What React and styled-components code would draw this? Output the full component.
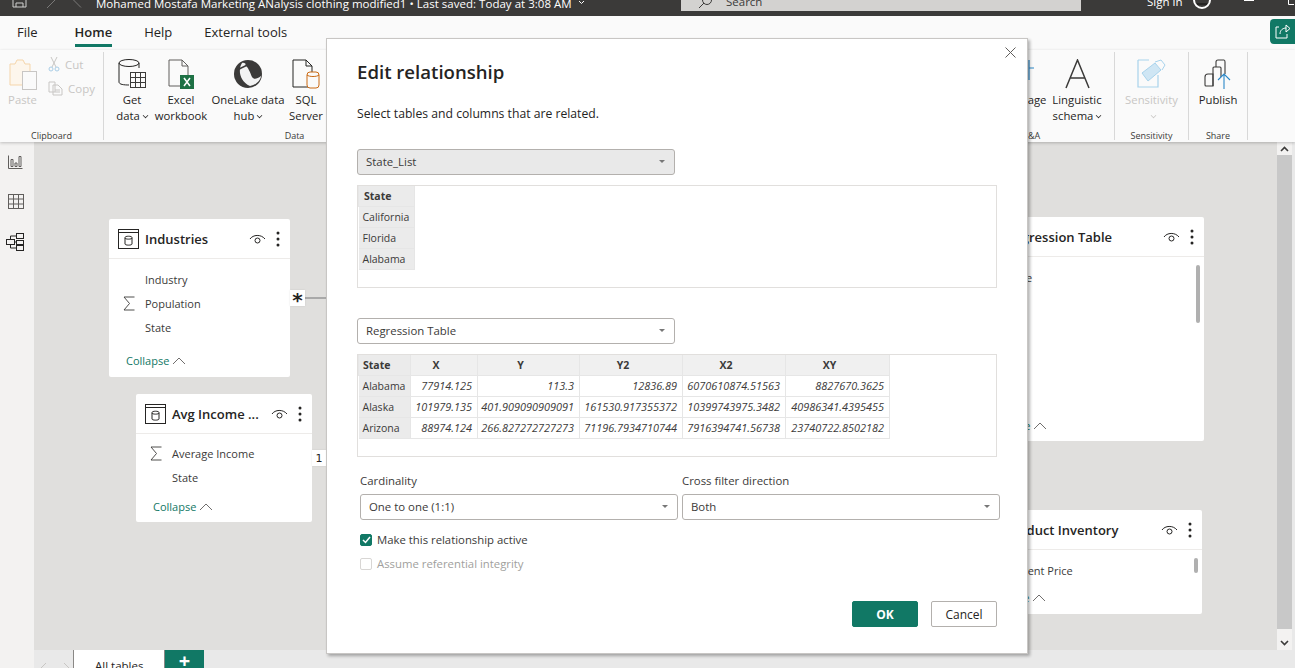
import React from 'react'
import styled, { createGlobalStyle } from 'styled-components'

const FONT = '"Open Sans", "Noto Sans", sans-serif'

const GlobalStyle = createGlobalStyle`
    html, body {
        margin: 0;
        padding: 0;
        height: 100%;
        overflow: hidden;
        background: #f3f2f1;
    }
    * { box-sizing: border-box; }
`

const Page = styled.div`
    position: relative;
    width: 1295px;
    height: 668px;
    overflow: hidden;
    display: flex;
    flex-direction: column;
    font-family: ${FONT};
    color: #252423;
`

const TitleBar = styled.div`
    height: 16px;
    flex: none;
    background: #3b3a39;
    display: flex;
    align-items: flex-start;
    color: #fff;
    font-size: 11.5px;
    overflow: hidden;
`

const TitleIcons = styled.div`
    width: 96px;
    flex: none;
    height: 16px;
    padding-left: 12px;
    display: flex;
    align-items: flex-start;
    gap: 17px;
`

const TitleText = styled.div`
    width: 585px;
    flex: none;
    white-space: nowrap;
    line-height: 7px;
    letter-spacing: 0.02px;
    display: flex;
    gap: 6px;
`

const SearchBox = styled.div`
    width: 400px;
    flex: none;
    height: 11px;
    background: #d3d2d0;
    color: #3b3a39;
    display: flex;
    align-items: flex-start;
    padding-left: 17px;
    gap: 14px;
    font-size: 11.5px;
    line-height: 3px;
`

const SignIn = styled.div`
    margin-left: 66px;
    line-height: 3px;
    display: flex;
    gap: 10px;
    align-items: flex-start;
`

const WindowButtons = styled.div`
    margin-left: 32px;
    width: 50px;
    flex: none;
    line-height: 0;
`

const TabRow = styled.div`
    height: 34px;
    flex: none;
    background: #fafafa;
    display: flex;
    padding-left: 17px;
    gap: 32px;
    position: relative;
`

const Tab = styled.div`
    font-size: 13px;
    height: 31px;
    line-height: 32px;
    margin-left: ${p => (p.$active ? 5 : 0)}px;
    color: #252423;
    font-weight: ${p => (p.$active ? 600 : 400)};
    border-bottom: 3px solid ${p => (p.$active ? '#117865' : 'transparent')};
`

const ShareBtn = styled.div`
    position: absolute;
    right: 0;
    top: 3px;
    width: 25px;
    height: 25px;
    background: #117865;
    border-radius: 4px 0 0 4px;
    display: flex;
    align-items: center;
    justify-content: center;
`

const Ribbon = styled.div`
    height: 92px;
    flex: none;
    background: #fafafa;
    display: flex;
    box-shadow: 0 1px 3px rgba(0, 0, 0, 0.22);
    position: relative;
    z-index: 1;
`

const Group = styled.div`
    width: ${p => p.$w}px;
    flex: none;
    height: 88px;
    margin-top: 2px;
    border-right: 1px solid #d8d8d8;
    display: flex;
    flex-direction: column;
`

const GroupItems = styled.div`
    flex: 1;
    display: flex;
    padding-left: ${p => p.$pad || 0}px;
    min-height: 0;
`

const GroupLabel = styled.div`
    height: 10px;
    text-align: center;
    font-size: 9px;
    line-height: 12px;
    color: #3b3a39;
`

const RibbonBtn = styled.div`
    width: ${p => p.$w}px;
    flex: none;
    display: flex;
    flex-direction: column;
    align-items: center;
    padding-top: 4px;
    font-size: 11.3px;
    line-height: 16px;
    text-align: center;
    white-space: nowrap;
    color: ${p => (p.$off ? '#c8c6c4' : '#252423')};
    svg { flex: none; }
`

const IconSlot = styled.div`
    height: 36px;
    display: flex;
    align-items: center;
    justify-content: center;
    flex: none;
`

const Chevron = styled.span`
    display: inline-block;
    width: 5px;
    height: 5px;
    margin-left: 3px;
    border-right: 1px solid currentColor;
    border-bottom: 1px solid currentColor;
    transform: translateY(-2px) rotate(45deg) scale(0.8);
`

const SmallCol = styled.div`
    display: flex;
    flex-direction: column;
    gap: 6px;
    padding-top: 3px;
    margin-left: 12px;
`

const SmallBtn = styled.div`
    display: flex;
    align-items: center;
    gap: 5px;
    height: 18px;
    font-size: 11.5px;
    color: #c8c6c4;
`

const Body = styled.div`
    flex: 1;
    display: flex;
    min-height: 0;
`

const Rail = styled.div`
    width: 34px;
    flex: none;
    background: #f3f2f1;
    display: flex;
    flex-direction: column;
    align-items: center;
    gap: 24px;
    padding: 13px 3px 0 0;
`

const Main = styled.div`
    flex: 1;
    display: flex;
    flex-direction: column;
    min-width: 0;
    background: #e9e9e9;
`

const CanvasRow = styled.div`
    height: 508px;
    flex: none;
    display: flex;
`

const Canvas = styled.div`
    position: relative;
    width: 1243px;
    flex: none;
    background: #e0dfdd;
    overflow: hidden;
`

const ScrollTrack = styled.div`
    width: 15px;
    flex: none;
    background: #c8c8c8;
    display: flex;
    flex-direction: column;
    justify-content: space-between;
`

const ScrollArrow = styled.div`
    height: ${p => (p.$up ? 13 : 21)}px;
    background: #f3f2f1;
    display: flex;
    justify-content: center;
    align-items: ${p => (p.$up ? 'flex-start' : 'flex-end')};
    padding: ${p => (p.$up ? '4px 0 0' : '0 0 4px')};
`

const BottomBar = styled.div`
    flex: 1;
    background: #e9e9e9;
    display: flex;
`

const SheetNav = styled.div`
    width: 39px;
    flex: none;
    display: flex;
    gap: 16px;
    padding: 13px 0 0 6px;
`

const SheetTab = styled.div`
    width: 92px;
    flex: none;
    padding: 7px 0 0 21px;
    background: #fff;
    border-left: 1px solid #8a8886;
    border-right: 1px solid #8a8886;
    font-size: 11.5px;
    line-height: 18px;
    white-space: nowrap;
`

const AddTab = styled.div`
    width: 39px;
    flex: none;
    background: #117865;
    color: #fff;
    font-size: 20px;
    font-weight: 700;
    line-height: 22px;
    text-align: center;
    overflow: hidden;
`

const Card = styled.div`
    position: absolute;
    left: ${p => p.$x}px;
    top: ${p => p.$y}px;
    width: ${p => p.$w}px;
    height: ${p => p.$h}px;
    background: #fff;
    border-radius: 2px;
`

const CardHead = styled.div`
    height: 40px;
    border-bottom: 1px solid #edebe9;
    display: flex;
    align-items: center;
    padding: 0 10px 0 9px;
    svg { flex: none; }
`

const CardTitle = styled.div`
    flex: 1;
    min-width: 0;
    margin-left: 6px;
    font-size: 13px;
    font-weight: 600;
    color: #252423;
    white-space: nowrap;
`

const Field = styled.div`
    height: 24px;
    display: flex;
    align-items: center;
    padding-left: 12px;
    font-size: 11px;
    color: #3b3a39;
`

const FieldIcon = styled.span`
    width: 24px;
    flex: none;
    display: flex;
    padding-left: 2px;
`

const Fields = styled.div`
    padding-top: ${p => p.$top}px;
`

const Collapse = styled.div`
    display: flex;
    align-items: center;
    gap: 3px;
    padding-left: 17px;
    margin-top: ${p => p.$top}px;
    font-size: 11px;
    line-height: 16px;
    color: #117865;
`

const CardScroll = styled.div`
    position: absolute;
    right: 4px;
    top: 48px;
    width: 4px;
    height: ${p => p.$h}px;
    background: #b0b0b0;
    border-radius: 2px;
`

const Connector = styled.div`
    position: absolute;
    left: ${p => p.$x}px;
    top: ${p => p.$y}px;
    width: ${p => p.$w}px;
    height: 2px;
    background: #a9a9a9;
`

const EndMark = styled.div`
    position: absolute;
    left: ${p => p.$x}px;
    top: ${p => p.$y}px;
    width: ${p => p.$w}px;
    height: 16px;
    background: #fff;
    box-shadow: 0 0 2px rgba(0, 0, 0, 0.1);
    overflow: hidden;
    font-size: ${p => p.$size}px;
    font-weight: ${p => p.$weight};
    line-height: ${p => p.$line}px;
    text-align: center;
    color: #252423;
    font-family: "DejaVu Sans", sans-serif;
`

const Dialog = styled.div`
    position: absolute;
    left: 326px;
    top: 38px;
    width: 702px;
    height: 616px;
    background: #fff;
    border: 1px solid #c8c6c4;
    box-shadow: 2px 2px 3px rgba(0, 0, 0, 0.3);
    padding: 20px 30px 0 30px;
    z-index: 5;
`

const CloseBtn = styled.div`
    position: absolute;
    right: 11px;
    top: 8px;
    width: 11px;
    height: 11px;
    line-height: 0;
`

const DialogTitle = styled.h1`
    margin: 0;
    font-size: 18.6px;
    line-height: 26px;
    font-weight: 600;
    color: #252423;
`

const DialogHint = styled.p`
    margin: 20px 0 0 0;
    font-size: 12.2px;
    line-height: 18px;
    color: #252423;
`

const Select = styled.div`
    width: 318px;
    height: 26px;
    border: 1px solid #b3b0ad;
    border-radius: 3px;
    background: ${p => (p.$off ? '#e9e9e9' : '#fff')};
    display: flex;
    align-items: center;
    justify-content: space-between;
    padding: 0 9px 1px 8px;
    font-size: 11.4px;
    color: #3b3a39;
    flex: none;
    &::after {
        content: '';
        border-left: 3px solid transparent;
        border-right: 3px solid transparent;
        border-top: 3px solid #777;
    }
`

const SelectWrap = styled.div`
    margin-top: ${p => p.$top}px;
`

const Preview = styled.div`
    width: 640px;
    height: 103px;
    margin-top: 10px;
    border: 1px solid #e1dfdd;
`

const Table = styled.table`
    border-collapse: collapse;
    table-layout: fixed;
    font-size: 10.5px;
    color: #3b3a39;
`

const Th = styled.th`
    height: 20px;
    padding: ${p => (p.$pad ? `0 0 0 ${p.$pad}px` : '0 16px 0 0')};
    border: 1px solid #e6e6e6;
    border-top: none;
    background: ${p => (p.$dark ? '#ebebeb' : '#f0f0f0')};
    font-weight: 700;
    text-align: ${p => (p.$pad ? 'left' : 'center')};
    width: ${p => p.$w}px;
`

const RowHead = styled.td`
    height: 21px;
    padding: 0 0 0 4px;
    border: 1px solid #e6e6e6;
    background: #ebebeb;
    white-space: nowrap;
    border-left: none;
`

const Cell = styled.td`
    height: 21px;
    padding: 0 5px 0 0;
    border: 1px solid #e6e6e6;
    font-size: 10.9px;
    font-style: italic;
    text-align: right;
    white-space: nowrap;
`

const OptionsGrid = styled.div`
    display: grid;
    grid-template-columns: 318px 318px;
    column-gap: 4px;
    margin: 16px 0 0 3px;
`

const FieldLabel = styled.div`
    font-size: 11.4px;
    line-height: 16px;
    margin-bottom: 5px;
    color: #3b3a39;
`

const CheckRow = styled.div`
    display: flex;
    align-items: center;
    gap: 5px;
    margin: ${p => p.$top}px 0 0 3px;
    font-size: 11.35px;
    line-height: 16px;
    color: ${p => (p.$off ? '#a19f9d' : '#3b3a39')};
`

const CheckBox = styled.span`
    width: 12px;
    height: 12px;
    border-radius: 2px;
    flex: none;
    display: flex;
    align-items: center;
    justify-content: center;
    background: ${p => (p.$on ? '#117865' : '#fff')};
    border: 1px solid ${p => (p.$on ? '#117865' : '#d8d6d4')};
`

const Actions = styled.div`
    display: flex;
    justify-content: flex-end;
    gap: 13px;
    margin-top: 29px;
`

const Button = styled.button`
    width: 66px;
    height: 26px;
    padding: 0;
    font-family: ${FONT};
    font-size: 12px;
    border-radius: 2px;
    font-weight: ${p => (p.$primary ? 700 : 400)};
    color: ${p => (p.$primary ? '#fff' : '#252423')};
    background: ${p => (p.$primary ? '#117865' : '#fff')};
    border: 1px solid ${p => (p.$primary ? '#117865' : '#b3b0ad')};
`

const DotsSvg = styled.svg`
    margin-left: 10px;
`

function Eye() {
    return (
        <svg width="17" height="12" viewBox="0 0 17 12" fill="none" stroke="#252423" strokeWidth="1">
            <path d="M1 6 C4 1.5 12 1 16 6" />
            <circle cx="8.5" cy="7.5" r="2.5" />
        </svg>
    )
}

function Dots() {
    return (
        <DotsSvg width="4" height="16" viewBox="0 0 4 16" fill="#252423">
            <circle cx="2" cy="2" r="1.5" />
            <circle cx="2" cy="8" r="1.5" />
            <circle cx="2" cy="14" r="1.5" />
        </DotsSvg>
    )
}

function TableGlyph() {
    return (
        <svg width="21" height="20" viewBox="0 0 21 20" fill="none" stroke="#252423">
            <rect x="0.5" y="0.5" width="20" height="19" />
            <path d="M0.5 3.5 H20.5" />
            <path d="M7 8.5 C7 6.8 14 6.8 14 8.5 V15 C14 16.5 7 16.5 7 15 Z M7 9 C7 10.5 14 10.5 14 9" />
        </svg>
    )
}

function Sigma() {
    return (
        <svg width="12" height="15" viewBox="0 0 12 15" fill="none" stroke="#3b3a39" strokeWidth="0.9">
            <path d="M11.5 1 H1 L6.5 7.5 L1 14 H11.5" />
        </svg>
    )
}

function ChevronUp() {
    return (
        <svg width="14" height="8" viewBox="0 0 14 8" fill="none" stroke="#605e5c" strokeWidth="0.9">
            <path d="M1 7 L7 1 L13 7" />
        </svg>
    )
}

function TableCard({ x, y, w, h, title, children }) {
    return (
        <Card $x={x} $y={y} $w={w} $h={h}>
            <CardHead>
                <TableGlyph />
                <CardTitle>{title}</CardTitle>
                <Eye />
                <Dots />
            </CardHead>
            {children}
        </Card>
    )
}

function GetDataIcon() {
    return (
        <svg width="29" height="32" viewBox="0 0 29 32" fill="none" stroke="#252423">
            <path d="M1 5 V24 C1 26.5 6 27 11 27 M21 5 V10" />
            <ellipse cx="11" cy="5" rx="10" ry="3.5" />
            <rect x="12.5" y="14.5" width="15" height="15" fill="#fafafa" stroke="#3b3a39" />
            <path d="M12.5 19.5 H27.5 M12.5 24.5 H27.5 M17.5 14.5 V29.5 M22.5 14.5 V29.5" stroke="#3b3a39" />
        </svg>
    )
}

function ExcelIcon() {
    return (
        <svg width="26" height="30" viewBox="0 0 26 30" fill="none">
            <path d="M1 1 H14 L20 7 V27 H1 Z M14 1 V7 H20" stroke="#605e5c" />
            <rect x="12" y="16" width="14" height="14" fill="#1e7145" />
            <path d="M16 19 L22 27 M22 19 L16 27" stroke="#fff" strokeWidth="1.5" />
        </svg>
    )
}

function OneLakeIcon() {
    return (
        <svg width="30" height="30" viewBox="0 0 30 30">
            <circle cx="15" cy="15" r="14" fill="#3b3a39" />
            <path d="M9 4 C5 10 6 22 17 27 C24 26 28 20 28 17 C24 20 21 21 19 18 C17 13 15 8 12 6 C14 5 11 3 9 4 Z" fill="#f3f3f3" />
            <path d="M4 12 C9 7 15 7 20 3" stroke="#3b3a39" strokeWidth="1.5" fill="none" />
        </svg>
    )
}

function SqlIcon() {
    return (
        <svg width="28" height="30" viewBox="0 0 28 30" fill="none">
            <path d="M1 1 H14 L20 7 V28 H1 Z M14 1 V7 H20" stroke="#252423" />
            <rect x="15" y="13" width="12" height="16" rx="3" fill="#fafafa" stroke="#ca6a14" />
            <path d="M15 16 C17 18 25 18 27 16" stroke="#ca6a14" />
        </svg>
    )
}

function PasteIcon() {
    return (
        <svg width="28" height="31" viewBox="0 0 28 31" fill="none">
            <path d="M1 5 H6 L8 1 H14 L16 5 H21 V26 H1 Z" stroke="#f5d5aa" fill="#fdf6ec" />
            <rect x="13.5" y="12.5" width="14" height="18" fill="#fafafa" stroke="#c8c6c4" />
        </svg>
    )
}

function CutIcon() {
    return (
        <svg width="12" height="16" viewBox="0 0 12 16" fill="none" stroke="#c8c6c4">
            <path d="M3 1 L8 11 M9 1 L4 11" />
            <circle cx="3" cy="13" r="2" stroke="#a9cde6" />
            <circle cx="9" cy="13" r="2" stroke="#a9cde6" />
        </svg>
    )
}

function CopyIcon() {
    return (
        <svg width="15" height="15" viewBox="0 0 15 15" fill="none" stroke="#c8c6c4">
            <path d="M1 1 H7 V11 H1 Z M5 4 H10 L14 8 V14 H5 Z M7 9 H12 M7 11 H12" />
        </svg>
    )
}

function LanguageIcon() {
    return (
        <svg width="26" height="32" viewBox="0 0 26 32" fill="none" stroke="#2b88c8" strokeWidth="1.2">
            <path d="M21 2 V22 M21 10 H26" />
        </svg>
    )
}

function LinguisticIcon() {
    return (
        <svg width="25" height="30" viewBox="0 0 25 30" fill="none" stroke="#3b3a39" strokeWidth="1.5">
            <path d="M1 29 L12.5 1 L24 29 M5 19 H20" />
        </svg>
    )
}

function SensitivityIcon() {
    return (
        <svg width="30" height="30" viewBox="0 0 30 30" fill="none" stroke="#a8d3ec">
            <path d="M1 1 H12 M1 1 V28 H21 V16" strokeWidth="1.2" />
            <path d="M5 14 L18 4 L24 11 L11 22 Z" fill="#cfe6f4" />
            <path d="M18 3 L24 1 L28 6 L25 11" fill="#fafafa" />
        </svg>
    )
}

function PublishIcon() {
    return (
        <svg width="28" height="31" viewBox="0 0 28 31" fill="none" stroke="#3b3a39" strokeWidth="1.1">
            <path d="M1 18 Q1 15 4 15 H9 V27 H2 Q1 27 1 26 Z" />
            <path d="M9 27 V9 Q9 8 10 8 H16 Q17 8 17 9 V18" />
            <path d="M12 8 V3 Q12 1 14 1 H20 Q21 1 21 3 V15" />
            <path d="M20 30 V15 M14 21 L20 15 L26 21" stroke="#2b88c8" />
        </svg>
    )
}

function RailIcon({ type, active }) {
    const color = active ? '#252423' : '#605e5c'
    if (type === 'report') {
        return (
            <svg width="15" height="15" viewBox="0 0 15 15" fill="none" stroke={color}>
                <path d="M0.5 0.5 V13.5 H14.5" />
                <path d="M3 4.5 H5 V11.5 H3 Z M7 8 H9 V11.5 H7 Z M11 1.5 H13 V11.5 H11 Z" />
            </svg>
        )
    }
    if (type === 'table') {
        return (
            <svg width="16" height="15" viewBox="0 0 16 15" fill="none" stroke={color}>
                <rect x="0.5" y="0.5" width="15" height="14" />
                <path d="M0.5 5 H15.5 M0.5 10 H15.5 M5.5 0.5 V14.5 M10.5 0.5 V14.5" />
            </svg>
        )
    }
    return (
        <svg width="19" height="18" viewBox="0 0 19 18" fill="none" stroke={color}>
            <rect x="10.5" y="0.5" width="7" height="5" />
            <rect x="0.5" y="6.5" width="8" height="5" />
            <rect x="10.5" y="7.5" width="7" height="4" />
            <rect x="10.5" y="12.5" width="7" height="5" />
            <path d="M4.5 6.5 V3 H10.5 M4.5 11.5 V15 H10.5 M8.5 9 H10.5" />
        </svg>
    )
}

function ScrollChevron({ up }) {
    return (
        <svg width="9" height="6" viewBox="0 0 9 6" fill="none" stroke="#3b3a39" strokeWidth="1.6">
            <path d={up ? 'M1 5 L4.5 1.5 L8 5' : 'M1 1 L4.5 4.5 L8 1'} />
        </svg>
    )
}

const ROWS = [
    ['Alabama', '77914.125', '113.3', '12836.89', '6070610874.51563', '8827670.3625'],
    ['Alaska', '101979.135', '401.909090909091', '161530.917355372', '10399743975.3482', '40986341.4395455'],
    ['Arizona', '88974.124', '266.827272727273', '71196.7934710744', '7916394741.56738', '23740722.8502182'],
]

export default function App() {
    return (
        <Page>
            <GlobalStyle />
            <TitleBar>
                <TitleIcons>
                    <svg width="15" height="8" viewBox="0 0 15 8" fill="none" stroke="#d0d0d0">
                        <path d="M1 0 V7 H14 V0 M4 7 V3 H11 V7" />
                    </svg>
                    <svg width="12" height="8" viewBox="0 0 12 8" fill="none" stroke="#7a7978">
                        <path d="M3 8 L11 0" />
                    </svg>
                    <svg width="10" height="8" viewBox="0 0 10 8" fill="none" stroke="#7a7978">
                        <path d="M8 7.5 L0.5 0" />
                    </svg>
                </TitleIcons>
                <TitleText>
                    Mohamed Mostafa Marketing ANalysis clothing modified1 • Last saved: Today at 3:08 AM
                    <svg width="7" height="6" viewBox="0 0 7 6" fill="none" stroke="#fff">
                        <path d="M1 1 L3.5 3.5 L6 1" />
                    </svg>
                </TitleText>
                <SearchBox>
                    <svg width="14" height="8" viewBox="0 0 14 8" fill="none" stroke="#3b3a39">
                        <path d="M1 8 L6 3" />
                        <circle cx="9" cy="0" r="4.5" />
                    </svg>
                    Search
                </SearchBox>
                <SignIn>
                    Sign in
                    <svg width="20" height="10" viewBox="0 0 20 10" fill="none" stroke="#fff" strokeWidth="2">
                        <circle cx="10" cy="0" r="8" />
                        <path d="M5 4 H15" stroke="#252423" />
                    </svg>
                </SignIn>
                <WindowButtons>
                    <svg width="50" height="5" viewBox="0 0 50 5" fill="none" stroke="#fff">
                        <path d="M0 0.5 H10" />
                        <path d="M44.5 0 V4.5 H50" />
                    </svg>
                </WindowButtons>
            </TitleBar>

            <TabRow>
                <Tab>File</Tab>
                <Tab $active>Home</Tab>
                <Tab>Help</Tab>
                <Tab>External tools</Tab>
                <ShareBtn>
                    <svg width="16" height="15" viewBox="0 0 16 15" fill="none" stroke="#fff">
                        <path d="M4 3 H1 V14 H12 V10" />
                        <path d="M5 10 C5 6 8 4 11 4 M11 1 L15 4.5 L11 8 V1" />
                    </svg>
                </ShareBtn>
            </TabRow>

            <Ribbon>
                <Group $w={104}>
                    <GroupItems $pad={9}>
                        <RibbonBtn $w={27} $off>
                            <IconSlot><PasteIcon /></IconSlot>
                            Paste
                        </RibbonBtn>
                        <SmallCol>
                            <SmallBtn><CutIcon /> Cut</SmallBtn>
                            <SmallBtn><CopyIcon /> Copy</SmallBtn>
                        </SmallCol>
                    </GroupItems>
                    <GroupLabel>Clipboard</GroupLabel>
                </Group>
                <Group $w={382}>
                    <GroupItems $pad={8}>
                        <RibbonBtn $w={40}>
                            <IconSlot><GetDataIcon /></IconSlot>
                            Get<span>data<Chevron /></span>
                        </RibbonBtn>
                        <RibbonBtn $w={58}>
                            <IconSlot><ExcelIcon /></IconSlot>
                            Excel<span>workbook</span>
                        </RibbonBtn>
                        <RibbonBtn $w={76}>
                            <IconSlot><OneLakeIcon /></IconSlot>
                            OneLake data<span>hub<Chevron /></span>
                        </RibbonBtn>
                        <RibbonBtn $w={40}>
                            <IconSlot><SqlIcon /></IconSlot>
                            SQL<span>Server</span>
                        </RibbonBtn>
                    </GroupItems>
                    <GroupLabel>Data</GroupLabel>
                </Group>
                <Group $w={461} />
                <Group $w={168}>
                    <GroupItems $pad={47}>
                        <RibbonBtn $w={54}>
                            <IconSlot><LanguageIcon /></IconSlot>
                            Language
                        </RibbonBtn>
                        <RibbonBtn $w={58}>
                            <IconSlot><LinguisticIcon /></IconSlot>
                            Linguistic<span>schema<Chevron /></span>
                        </RibbonBtn>
                    </GroupItems>
                    <GroupLabel>Q&amp;A</GroupLabel>
                </Group>
                <Group $w={74}>
                    <GroupItems>
                        <RibbonBtn $w={73} $off>
                            <IconSlot><SensitivityIcon /></IconSlot>
                            Sensitivity<span><Chevron /></span>
                        </RibbonBtn>
                    </GroupItems>
                    <GroupLabel>Sensitivity</GroupLabel>
                </Group>
                <Group $w={59}>
                    <GroupItems>
                        <RibbonBtn $w={58}>
                            <IconSlot><PublishIcon /></IconSlot>
                            Publish
                        </RibbonBtn>
                    </GroupItems>
                    <GroupLabel>Share</GroupLabel>
                </Group>
            </Ribbon>

            <Body>
                <Rail>
                    <RailIcon type="report" />
                    <RailIcon type="table" />
                    <RailIcon type="model" active />
                </Rail>
                <Main>
                    <CanvasRow>
                        <Canvas>
                            <TableCard x={75} y={77} w={181} h={158} title="Industries">
                                <Fields $top={8}>
                                    <Field><FieldIcon />Industry</Field>
                                    <Field><FieldIcon><Sigma /></FieldIcon>Population</Field>
                                    <Field><FieldIcon />State</Field>
                                </Fields>
                                <Collapse $top={14}>Collapse <ChevronUp /></Collapse>
                            </TableCard>
                            <TableCard x={102} y={252} w={176} h={128} title="Avg Income ...">
                                <Fields $top={7}>
                                    <Field><FieldIcon><Sigma /></FieldIcon>Average Income</Field>
                                    <Field><FieldIcon />State</Field>
                                </Fields>
                                <Collapse $top={10}>Collapse <ChevronUp /></Collapse>
                            </TableCard>
                            <TableCard x={936} y={75} w={234} h={224} title="Regression Table">
                                <Fields $top={8}>
                                    <Field><FieldIcon />State</Field>
                                </Fields>
                                <CardScroll $h={58} />
                                <Collapse $top={129}>Collapse <ChevronUp /></Collapse>
                            </TableCard>
                            <TableCard x={935} y={368} w={233} h={104} title="Product Inventory">
                                <Fields $top={8}>
                                    <Field><FieldIcon />Current Price</Field>
                                </Fields>
                                <CardScroll $h={15} />
                                <Collapse $top={8}>Collapse <ChevronUp /></Collapse>
                            </TableCard>
                            <Connector $x={268} $y={155} $w={40} />
                            <EndMark $x={256} $y={148} $w={15} $size={20} $weight={600} $line={20}>*</EndMark>
                            <EndMark $x={278} $y={308} $w={14} $size={11} $weight={400} $line={17}>1</EndMark>
                        </Canvas>
                        <ScrollTrack>
                            <ScrollArrow $up><ScrollChevron up /></ScrollArrow>
                            <ScrollArrow><ScrollChevron /></ScrollArrow>
                        </ScrollTrack>
                    </CanvasRow>
                    <BottomBar>
                        <SheetNav>
                            <svg width="7" height="9" viewBox="0 0 7 9" fill="none" stroke="#c8c6c4"><path d="M6 0 L1 5 L6 9" /></svg>
                            <svg width="7" height="9" viewBox="0 0 7 9" fill="none" stroke="#c8c6c4"><path d="M1 0 L6 5 L1 9" /></svg>
                        </SheetNav>
                        <SheetTab>All tables</SheetTab>
                        <AddTab>+</AddTab>
                    </BottomBar>
                </Main>
            </Body>

            <Dialog>
                <CloseBtn>
                    <svg width="11" height="11" viewBox="0 0 11 11" stroke="#605e5c" fill="none">
                        <path d="M0.5 0.5 L10.5 10.5 M10.5 0.5 L0.5 10.5" />
                    </svg>
                </CloseBtn>
                <DialogTitle>Edit relationship</DialogTitle>
                <DialogHint>Select tables and columns that are related.</DialogHint>

                <SelectWrap $top={26}>
                    <Select $off>State_List</Select>
                </SelectWrap>
                <Preview>
                    <Table>
                        <thead><tr><Th $dark $w={56} $pad={5}>State</Th></tr></thead>
                        <tbody>
                            <tr><RowHead>California</RowHead></tr>
                            <tr><RowHead>Florida</RowHead></tr>
                            <tr><RowHead>Alabama</RowHead></tr>
                        </tbody>
                    </Table>
                </Preview>

                <SelectWrap $top={30}>
                    <Select>Regression Table</Select>
                </SelectWrap>
                <Preview>
                    <Table>
                        <thead>
                            <tr>
                                <Th $dark $w={52} $pad={4}>State</Th>
                                <Th $w={67}>X</Th>
                                <Th $w={102}>Y</Th>
                                <Th $w={103}>Y2</Th>
                                <Th $w={103}>X2</Th>
                                <Th $w={104}>XY</Th>
                            </tr>
                        </thead>
                        <tbody>
                            {ROWS.map(row => (
                                <tr key={row[0]}>
                                    <RowHead>{row[0]}</RowHead>
                                    {row.slice(1).map(v => <Cell key={v}>{v}</Cell>)}
                                </tr>
                            ))}
                        </tbody>
                    </Table>
                </Preview>

                <OptionsGrid>
                    <div>
                        <FieldLabel>Cardinality</FieldLabel>
                        <Select>One to one (1:1)</Select>
                    </div>
                    <div>
                        <FieldLabel>Cross filter direction</FieldLabel>
                        <Select>Both</Select>
                    </div>
                </OptionsGrid>
                <CheckRow $top={12}>
                    <CheckBox $on>
                        <svg width="9" height="8" viewBox="0 0 9 8" fill="none" stroke="#fff" strokeWidth="1.5">
                            <path d="M1 4 L3.5 6.5 L8 1" />
                        </svg>
                    </CheckBox>
                    Make this relationship active
                </CheckRow>
                <CheckRow $top={8} $off>
                    <CheckBox />
                    Assume referential integrity
                </CheckRow>
                <Actions>
                    <Button $primary>OK</Button>
                    <Button>Cancel</Button>
                </Actions>
            </Dialog>
        </Page>
    )
}
